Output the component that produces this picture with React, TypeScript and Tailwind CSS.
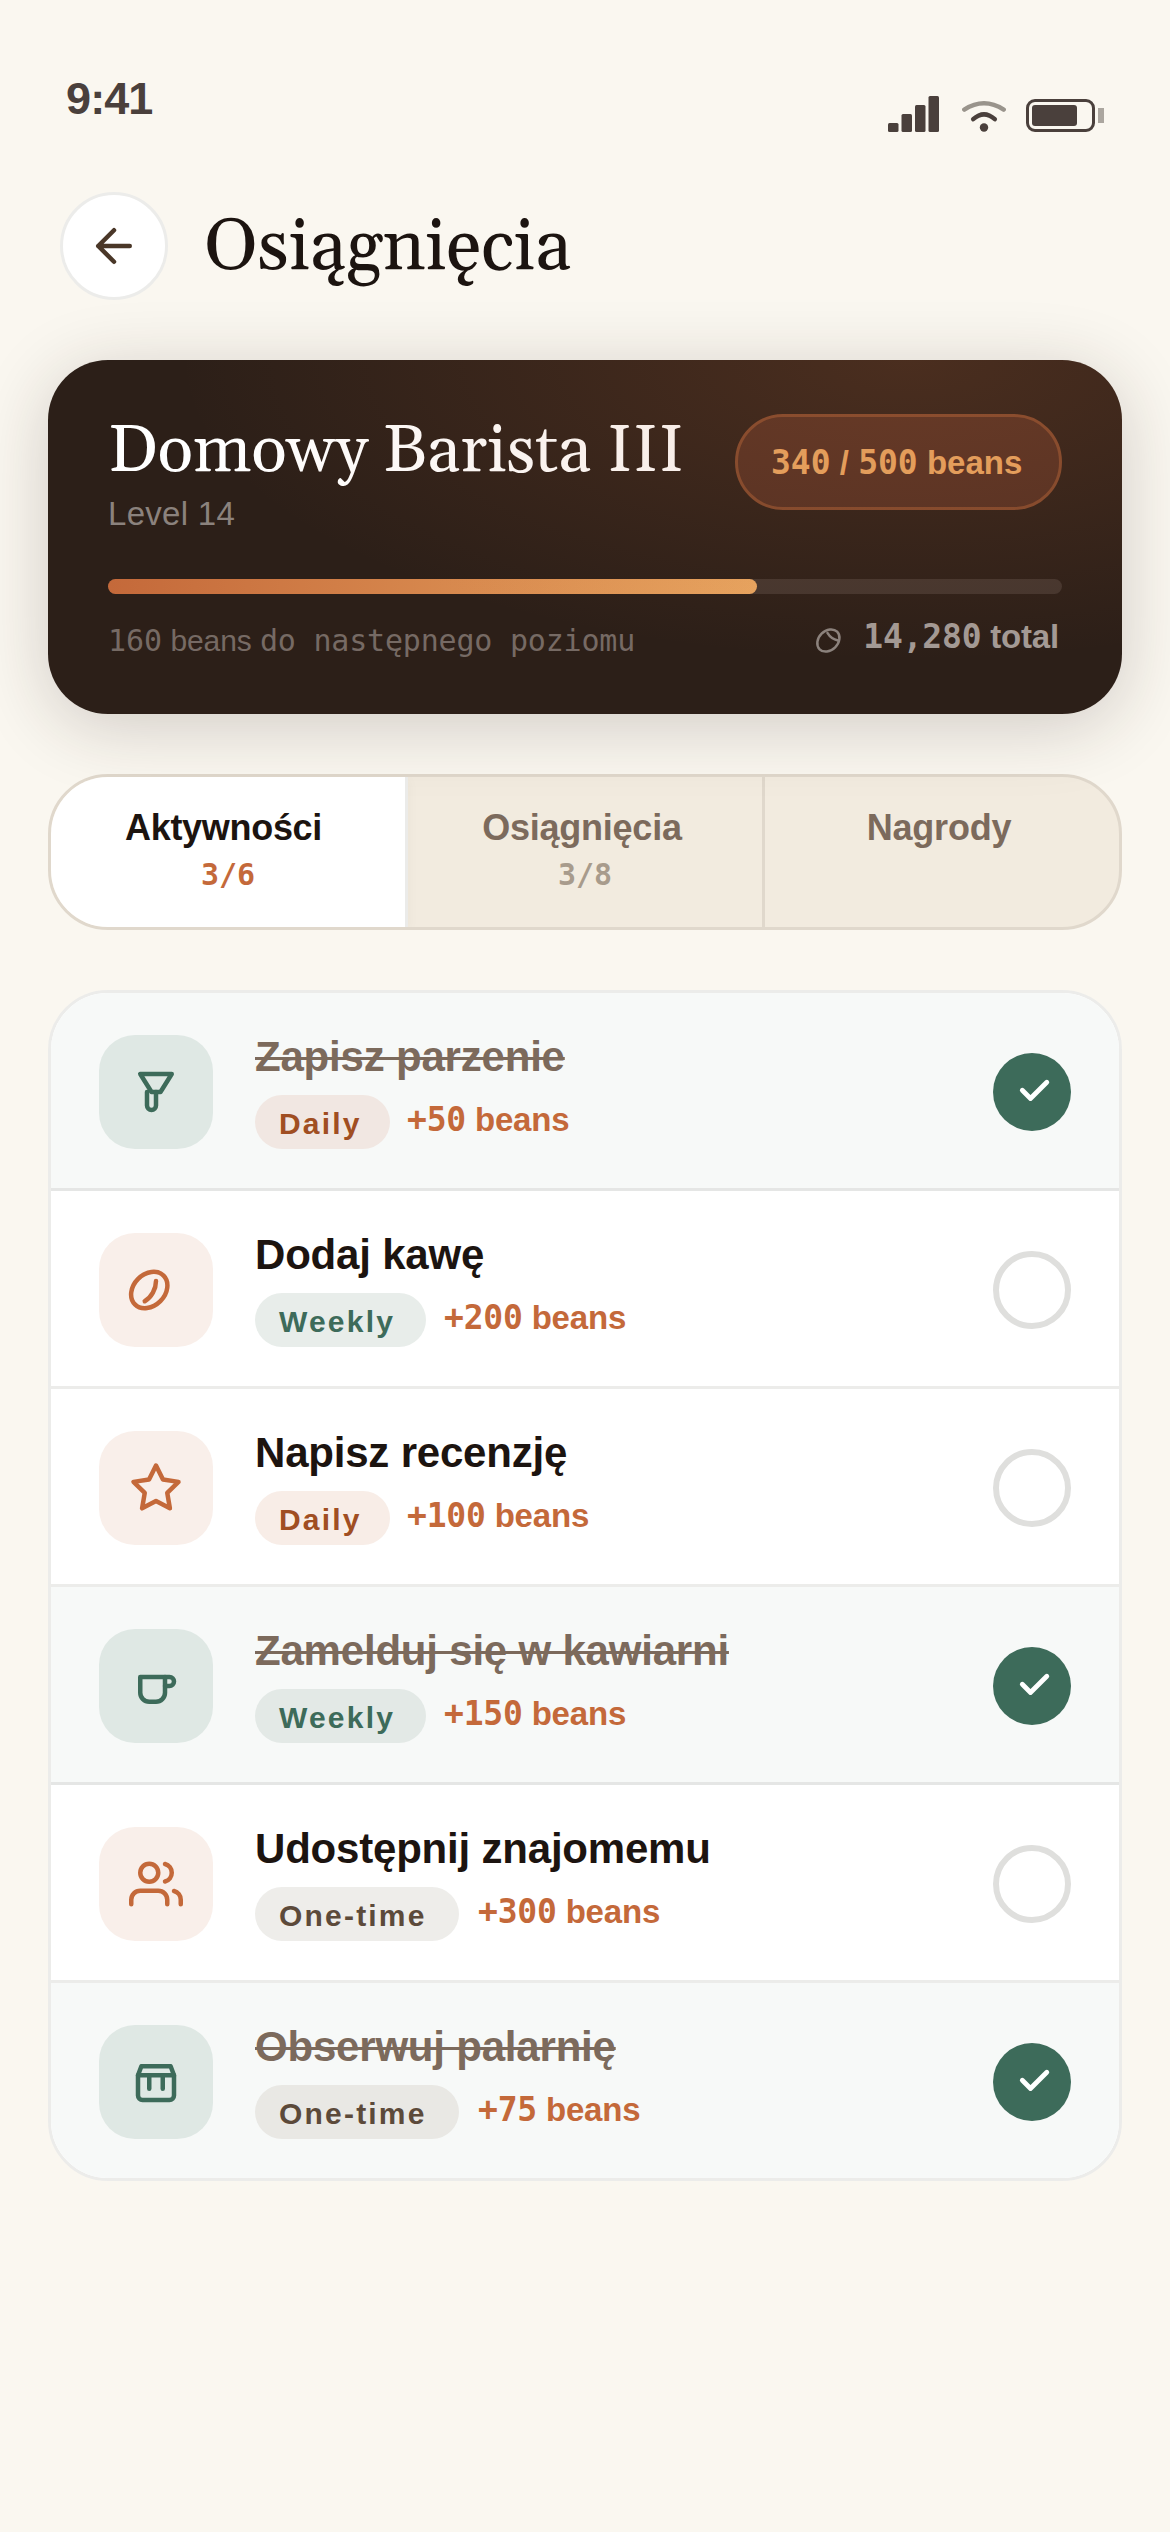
import clsx from "clsx";

const SANS = "font-['Liberation_Sans',Arial,sans-serif]";
const SERIF = "font-[Gelasio,Georgia,'Liberation_Serif',serif]";
const MONO = "font-['DejaVu_Sans_Mono',monospace]";

type Frequency = "daily" | "weekly" | "once";
type IconName = "brew" | "bean" | "star" | "cup" | "users" | "store";

interface Activity {
  title: string;
  frequency: Frequency;
  reward: number;
  icon: IconName;
  done: boolean;
}

const activities: Activity[] = [
  { title: "Zapisz parzenie", frequency: "daily", reward: 50, icon: "brew", done: true },
  { title: "Dodaj kawę", frequency: "weekly", reward: 200, icon: "bean", done: false },
  { title: "Napisz recenzję", frequency: "daily", reward: 100, icon: "star", done: false },
  { title: "Zamelduj się w kawiarni", frequency: "weekly", reward: 150, icon: "cup", done: true },
  { title: "Udostępnij znajomemu", frequency: "once", reward: 300, icon: "users", done: false },
  { title: "Obserwuj palarnię", frequency: "once", reward: 75, icon: "store", done: true },
];

const badges: Record<Frequency, { label: string; className: string; open: string; done: string }> = {
  daily: { label: "Daily", className: "w-[135px] mr-[17px] text-[#a04e22]", open: "bg-[#f8ede7]", done: "bg-[#f1e7e2]" },
  weekly: { label: "Weekly", className: "w-[171px] mr-[18px] text-[#3d6b5a]", open: "bg-[#e8edea]", done: "bg-[#e3e9e6]" },
  once: { label: "One-time", className: "w-[204px] mr-[19px] text-[#5c4a3a]", open: "bg-[#eeedea]", done: "bg-[#e9e8e4]" },
};

const iconPaths: Record<IconName, React.ReactNode> = {
  brew: (
    <>
      <path d="M5 4h14l-5 8h-4L5 4z" />
      <path d="M8 12v6a2 2 0 0 0 4 0v-6" />
    </>
  ),
  bean: (
    <>
      <ellipse cx="9" cy="12" rx="9" ry="7" transform="rotate(-45 9 12)" />
      <path d="M12 8c0 3.6-2 7.2-5 9" />
    </>
  ),
  star: (
    <polygon points="12 2 15.09 8.26 22 9.27 17 14.14 18.18 21.02 12 17.77 5.82 21.02 7 14.14 2 9.27 8.91 8.26 12 2" />
  ),
  cup: (
    <>
      <path d="M5 8h11v7a4 4 0 0 1-4 4H9a4 4 0 0 1-4-4V8z" />
      <path d="M16 8h2a2 2 0 0 1 0 4h-2" />
    </>
  ),
  users: (
    <>
      <path d="M17 21v-2a4 4 0 0 0-4-4H5a4 4 0 0 0-4 4v2" />
      <circle cx="9" cy="7" r="4" />
      <path d="M23 21v-2a4 4 0 0 0-3-3.87" />
      <path d="M16 3.13a4 4 0 0 1 0 7.75" />
    </>
  ),
  store: (
    <>
      <path d="M4 9v9a2 2 0 0 0 2 2h12a2 2 0 0 0 2-2V9" />
      <path d="M4 9l1.5-4h13L20 9H4z" />
      <path d="M9 9v6M15 9v6" />
    </>
  ),
};

const StatusBar: React.FC = () => (
  <div className="flex h-[192px] justify-between pl-[66px] pr-[66px] pt-[72px]">
    <span className="h-[54px] text-[45px] font-bold leading-[54px] tracking-[-0.9px] text-[#4a403c]">9:41</span>
    <div className="flex pt-6">
      <svg width="51" height="36" viewBox="0 0 17 12" fill="#4a403c">
        <rect x="0" y="9" width="3.5" height="3" rx="0.5" />
        <rect x="4.5" y="6" width="3.5" height="6" rx="0.5" />
        <rect x="9" y="3" width="3.5" height="9" rx="0.5" />
        <rect x="13.5" y="0" width="3.5" height="12" rx="0.5" />
      </svg>
      <svg className="ml-[21px]" width="48" height="36" viewBox="0 0 48 36" fill="none" stroke="#4a403c" strokeWidth="4.5" strokeLinecap="round">
        <path d="M4.3 13.6Q24 1 43.7 13.6" stroke="#99948c" />
        <path d="M13.2 23.2Q24 13.4 34.8 23.2" />
        <circle cx="24" cy="31.5" r="4.2" fill="#4a403c" stroke="none" />
      </svg>
      <svg className="ml-[18px]" width="78" height="36" viewBox="0 0 78 36">
        <rect x="1.5" y="4.5" width="66" height="30" rx="7.5" fill="none" stroke="#4a403c" strokeWidth="3" />
        <rect x="6" y="9" width="45" height="21" rx="3" fill="#4a403c" />
        <rect x="72" y="12" width="6" height="15" fill="#aba69f" />
      </svg>
    </div>
  </div>
);

const Header: React.FC = () => (
  <div className="flex h-[108px] items-center gap-9 pl-[60px]">
    <button className="flex size-[108px] items-center justify-center rounded-full border-3 border-[#ececea] bg-white">
      <svg width="54" height="54" viewBox="0 0 24 24" fill="none" stroke="#4a3728" strokeWidth="2" strokeLinecap="round" strokeLinejoin="round">
        <path d="M19 12H5M12 19l-7-7 7-7" />
      </svg>
    </button>
    <h1 className={clsx(SERIF, "pt-[3px] text-[72px] leading-[90px] text-[#1c1410]")}>Osiągnięcia</h1>
  </div>
);

const LevelCard: React.FC = () => (
  <section className="relative mx-12 mt-[60px] h-[354px] rounded-[60px] bg-[#2c1f18] px-[60px] pt-[54px] shadow-[0_12px_72px_rgba(44,30,24,0.2)]">
    <div className="flex h-[120px] justify-between">
      <div>
        <h2 className={clsx(SERIF, "text-[66px] leading-[77px] whitespace-nowrap text-white")}>Domowy Barista III</h2>
        <p className="pt-[2px] text-[33px] leading-[42px] tracking-[0.3px] text-[#8b827d]">Level 14</p>
      </div>
      <div className="h-24 w-[327px] rounded-full border-3 border-[#80482c] bg-[#522f22] pl-[33px] pt-[2px] text-[33px] font-bold leading-[87px] whitespace-nowrap text-[#e8a560]">
        <span className={MONO}>340</span> / <span className={MONO}>500</span> beans
      </div>
    </div>
    <div className="mt-[45px] h-[15px] rounded-full bg-[#43352e]">
      <div className="h-full w-[68%] rounded-full bg-linear-to-r from-[#c4693a] to-[#e8a560]" />
    </div>
    <div className="mt-[21px] flex items-start justify-between">
      <p className="pt-2 text-[30px] leading-9 whitespace-pre text-[#766a64]">
        <span className={MONO}>160</span>
        <span className="tracking-[-0.1px]"> beans </span>
        <span className={clsx(MONO, "tracking-[-0.2px]")}>do następnego poziomu</span>
      </p>
      <div className="flex items-center pr-[3px]">
        <svg className="mr-[14px] mt-[8px]" width="33" height="33" viewBox="0 0 24 24" fill="none" stroke="#8b827d" strokeWidth="1.8" strokeLinecap="round" overflow="visible">
          <ellipse cx="9" cy="12" rx="9" ry="7" transform="rotate(-45 9 12)" />
          <path d="M8.3 6.5Q11 11 16 12" />
        </svg>
        <span className="text-[33px] font-bold leading-[43px] tracking-[-0.2px] text-[#a39a95]">
          <span className={MONO}>14,280</span> total
        </span>
      </div>
    </div>
    {/* copper glow laid over the content */}
    <div className="pointer-events-none absolute inset-0 rounded-[60px] bg-[radial-gradient(ellipse_at_80%_0%,rgba(196,105,58,0.2)_0%,transparent_60%)]" />
  </section>
);

const Tabs: React.FC = () => (
  <nav className="mx-12 mt-[60px] flex h-[156px] overflow-hidden rounded-[60px] border-3 border-[#e0d8cc] bg-[#f2ebdf] text-center">
    <div className="relative w-[357px] border-r-3 border-[#ebebe9] bg-white pt-[30px] shadow-[0_3px_12px_rgba(44,30,24,0.04)]">
      <div className="pr-[9px] text-4xl font-bold leading-[42px] tracking-[-0.3px] text-[#1c1410]">Aktywności</div>
      <div className={clsx(MONO, "mt-2 text-[30px] font-bold leading-9 text-[#c4693a]")}>3/6</div>
    </div>
    <div className="w-[357px] border-r-3 border-[#e0d8cc] pt-[30px]">
      <div className="pr-[6px] text-4xl font-bold leading-[42px] tracking-[-0.25px] text-[#7c6a5c]">Osiągnięcia</div>
      <div className={clsx(MONO, "mt-2 text-[30px] font-bold leading-9 text-[#a89b8c]")}>3/8</div>
    </div>
    <div className="flex-1 pt-[30px]">
      <div className="pr-[6px] text-4xl font-bold leading-[42px] tracking-[-0.2px] text-[#7c6a5c]">Nagrody</div>
    </div>
  </nav>
);

const StatusMark: React.FC<{ done: boolean }> = ({ done }) =>
  done ? (
    <div className="mt-[18px] size-[78px] rounded-full bg-[#3d6b5a]">
      <svg width="78" height="78" viewBox="0 0 78 78" fill="none" stroke="white" strokeWidth="4.8" strokeLinecap="round" strokeLinejoin="round">
        <path d="M29.3 37.3l8.2 8.2 16.3-16.3" />
      </svg>
    </div>
  ) : (
    <div className="mt-[18px] size-[78px] rounded-full border-6 border-[#dfdfdd]" />
  );

const ActivityRow: React.FC<{ activity: Activity; last: boolean }> = ({ activity, last }) => {
  const { title, frequency, reward, icon, done } = activity;
  const badge = badges[frequency];

  return (
    <li
      className={clsx(
        "flex items-start pl-12 pr-12 pt-[42px]",
        last ? "h-[195px]" : "h-[198px] border-b-3",
        done ? "border-[#e5e6e5] bg-[#f7f9f8]" : "border-[#ececea] bg-white",
      )}
    >
      <div
        className={clsx(
          "flex size-[114px] items-center justify-center rounded-[36px]",
          done ? "bg-[#dfe8e4] text-[#3d6b5a]" : "bg-[#f9efea] text-[#c4693a]",
        )}
      >
        <svg width="54" height="54" viewBox="0 0 24 24" fill="none" stroke="currentColor" strokeWidth="2" strokeLinecap="round" strokeLinejoin="round" overflow="visible">
          {iconPaths[icon]}
        </svg>
      </div>
      <div className="-mt-[2px] ml-[42px] flex-1">
        <div
          className={clsx(
            "text-[42px] font-bold leading-[48px] tracking-[-0.2px]",
            done ? "text-[#7c6a5c]" : "text-[#1c1410]",
          )}
        >
          <span className={clsx(done && "line-through decoration-[3px]")}>{title}</span>
        </div>
        <div className="mt-[14px] flex h-[54px]">
          <span
            className={clsx(
              "h-[54px] rounded-full pl-6 pt-[3px] text-[30px] font-bold leading-[51px] tracking-[2.2px]",
              badge.className,
              done ? badge.done : badge.open,
            )}
          >
            {badge.label}
          </span>
          <span className="text-[33px] font-bold leading-[49px] tracking-[-0.2px] text-[#c4693a]">
            <span className={MONO}>+{reward}</span> beans
          </span>
        </div>
      </div>
      <StatusMark done={done} />
    </li>
  );
};

const App: React.FC = () => {
  return (
    <div className={clsx(SANS, "h-[2532px] w-[1170px] overflow-hidden bg-[#faf7f0]")}>
      <StatusBar />
      <Header />
      <LevelCard />
      <Tabs />
      <ul className="mx-12 mt-[60px] overflow-hidden rounded-[60px] border-3 border-[#ececea] bg-white">
        {activities.map((activity, index) => (
          <ActivityRow key={activity.title} activity={activity} last={index === activities.length - 1} />
        ))}
      </ul>
    </div>
  );
};

export default App;
